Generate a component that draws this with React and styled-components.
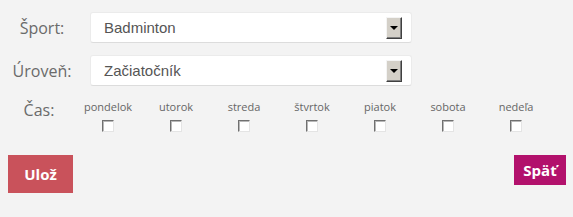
import React from "react";
import styled, { createGlobalStyle } from "styled-components";

const Global = createGlobalStyle`
  html, body { margin: 0; padding: 0; background: #f3f3f3; }
  body { font-family: "Open Sans", "Liberation Sans", sans-serif; }
`;

const Page = styled.div`
  width: 573px;
  height: 217px;
  box-sizing: border-box;
  padding: 12px 7px 0 8px;
  display: flex;
  flex-direction: column;
`;

const Row = styled.div`
  display: flex;
  align-items: center;
  margin-bottom: ${(p) => p.$mb || 0}px;
`;

const Label = styled.div`
  width: ${(p) => p.$w}px;
  margin-left: -8px;
  padding-left: ${(p) => p.$pl || 0}px;
  box-sizing: border-box;
  text-align: center;
  font-size: 16px;
  font-weight: 400;
  color: #6a6a6a;
  align-self: ${(p) => p.$self || "center"};
`;

const SelectBox = styled.div`
  margin-left: 6px;
  width: 322px;
  height: 31px;
  box-sizing: border-box;
  background: #fff;
  border: 1px solid #ebebeb;
  border-bottom-color: #dcdcdc;
  border-radius: 3px;
  display: flex;
  align-items: center;
  justify-content: space-between;
  padding: 0 9px 0 13px;
`;

const SelectText = styled.span`
  font-family: "Liberation Sans", Arial, sans-serif;
  font-size: 15px;
  color: #555;
`;

const DropButton = styled.span`
  width: 16px;
  height: 22px;
  box-sizing: border-box;
  background: #d4d0c8;
  border-top: 1px solid #f4f4f4;
  border-left: 1px solid #f4f4f4;
  border-right: 1px solid #404040;
  border-bottom: 1px solid #404040;
  box-shadow: inset -1px -1px 0 #808080;
  display: flex;
  align-items: center;
  justify-content: center;
`;

const Arrow = styled.span`
  width: 0;
  height: 0;
  border-left: 4px solid transparent;
  border-right: 4px solid transparent;
  border-top: 4px solid #000;
  margin-top: 1px;
`;

const Days = styled.div`
  display: grid;
  grid-template-columns: repeat(7, 68px);
`;

const Day = styled.label`
  display: flex;
  flex-direction: column;
  align-items: center;
  font-size: 11px;
  line-height: 15px;
  color: #666;
`;

const Check = styled.input.attrs({ type: "checkbox" })`
  appearance: none;
  -webkit-appearance: none;
  margin: 6px 0 0 0;
  width: 12px;
  height: 12px;
  box-sizing: border-box;
  background: #fff;
  border-top: 1px solid #707070;
  border-left: 1px solid #707070;
  border-right: 1px solid #e4e4e4;
  border-bottom: 1px solid #e4e4e4;
  box-shadow: inset 1px 1px 0 #b8b8b8;
`;

const Actions = styled.div`
  display: flex;
  justify-content: space-between;
  align-items: flex-start;
  margin-top: 23px;
`;

const Button = styled.button`
  border: none;
  padding: 0;
  color: #fff;
  font-family: "Open Sans", sans-serif;
  font-weight: 700;
  font-size: 15px;
  background: ${(p) => p.$bg};
  width: ${(p) => p.$w}px;
  height: ${(p) => p.$h}px;
`;

const days = ["pondelok", "utorok", "streda", "štvrtok", "piatok", "sobota", "nedeľa"];

export default function App() {
  return (
    <>
      <Global />
      <Page>
        <Row $mb={12}>
          <Label $w={84}>Šport:</Label>
          <SelectBox>
            <SelectText>Badminton</SelectText>
            <DropButton><Arrow /></DropButton>
          </SelectBox>
        </Row>
        <Row $mb={13}>
          <Label $w={84}>Úroveň:</Label>
          <SelectBox>
            <SelectText>Začiatočník</SelectText>
            <DropButton><Arrow /></DropButton>
          </SelectBox>
        </Row>
        <Row>
          <Label $w={74} $pl={4} $self="flex-start">Čas:</Label>
          <Days>
            {days.map((d) => (
              <Day key={d}>
                {d}
                <Check />
              </Day>
            ))}
          </Days>
        </Row>
        <Actions>
          <Button $bg="#c9525b" $w={65} $h={38}>Ulož</Button>
          <Button $bg="#b2116c" $w={52} $h={30}>Späť</Button>
        </Actions>
      </Page>
    </>
  );
}
